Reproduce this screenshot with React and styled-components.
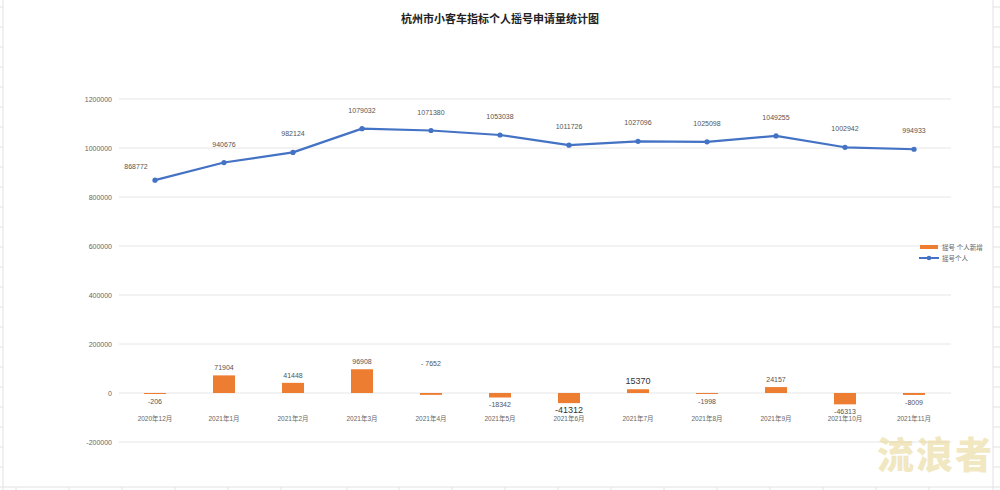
import React from "react";
import styled, { createGlobalStyle } from "styled-components";

const Global = createGlobalStyle`
  html, body { margin: 0; padding: 0; background: #fff; }
  body { font-family: "Microsoft YaHei", "Noto Sans CJK SC", "Liberation Sans", sans-serif; }
`;

const Sheet = styled.div`
  position: relative;
  width: 1000px;
  height: 490px;
  overflow: hidden;
  background: #fff;
`;

const Title = styled.div`
  padding-top: 10px;
  text-align: center;
  font-size: 11px;
  font-weight: 700;
  color: #222;
  font-family: "Noto Sans CJK SC", sans-serif;
`;

const Watermark = styled.div`
  position: absolute;
  right: 6px;
  bottom: 10px;
  font-family: "Noto Sans CJK SC", sans-serif;
  font-weight: 900;
  font-size: 37px;
  letter-spacing: 2px;
  color: rgba(232, 215, 150, 0.6);
`;

const Chart = styled.svg`
  position: absolute;
  left: 0;
  top: 0;
  font-family: "Liberation Sans", "Noto Sans CJK SC", sans-serif;
`;

const months = ["2020年12月","2021年1月","2021年2月","2021年3月","2021年4月","2021年5月","2021年6月","2021年7月","2021年8月","2021年9月","2021年10月","2021年11月"];
const totals = [868772,940676,982124,1079032,1071380,1053038,1011726,1027096,1025098,1049255,1002942,994933];
const deltas = [-206,71904,41448,96908,-7652,-18342,-41312,15370,-1998,24157,-46313,-8009];

const y = v => 393 - (v * 49) / 200000;
const x = i => 155 + i * 69;
const ticks = [1200000,1000000,800000,600000,400000,200000,0,-200000];

export default function App() {
  const line = totals.map((v, i) => `${x(i)},${y(v)}`).join(" ");
  return (
    <Sheet>
      <Global />
      <Chart width="1000" height="490">
        {/* spreadsheet cell lines */}
        <line x1="3" y1="0" x2="3" y2="490" stroke="#e2e2e2" />
        <line x1="993" y1="0" x2="993" y2="490" stroke="#e2e2e2" />
        <line x1="0" y1="487" x2="1000" y2="487" stroke="#e2e2e2" />
        {Array.from({ length: 24 }).map((_, i) => (
          <g key={i}>
            <line x1="0" y1={i * 20 + 7} x2="3" y2={i * 20 + 7} stroke="#e2e2e2" />
            <line x1="993" y1={i * 20 + 7} x2="1000" y2={i * 20 + 7} stroke="#e2e2e2" />
          </g>
        ))}
        {[16, 69, 122, 175, 228, 281, 347, 399, 452, 505, 558, 611, 664, 717, 770, 823, 876, 929].map(v => (
          <line key={v} x1={v} y1="487" x2={v} y2="490" stroke="#e2e2e2" />
        ))}
        {ticks.map(t => (
          <g key={t}>
            <line x1="119" y1={y(t)} x2="951" y2={y(t)} stroke="#e6e6e6" strokeWidth="1" />
            <text x="112" y={y(t) + 2.5} fontSize="7" fill="#666" textAnchor="end">{t}</text>
          </g>
        ))}
        {deltas.map((d, i) => {
          const top = d > 0 ? y(d) : 393;
          const h = Math.max(Math.abs(y(d) - 393), 1);
          return (
            <g key={i}>
              <rect x={x(i) - 11} y={top} width="22" height={h} fill="#ed7d31" />
              <text
                x={x(i)}
                y={d > 0 ? top - 5 : i === 4 ? 366 : 393 + h + 10}
                fontSize={i === 6 || i === 7 ? 9 : 7}
                fill={i === 6 || i === 7 ? "#333" : "#555"}
                textAnchor="middle"
              >
                {i === 4 ? "- 7652" : d}
              </text>
              <text x={x(i)} y="421" fontSize="6.5" fill="#666" textAnchor="middle">{months[i]}</text>
            </g>
          );
        })}
        <polyline points={line} fill="none" stroke="#4472c4" strokeWidth="2.2" strokeLinejoin="round" />
        {totals.map((v, i) => (
          <g key={i}>
            <circle cx={x(i)} cy={y(v)} r="2.6" fill="#4472c4" />
            <text x={i === 0 ? x(i) - 19 : x(i)} y={i === 0 ? y(v) - 11 : y(v) - 16} fontSize="7" fill="#555" textAnchor="middle">{v}</text>
          </g>
        ))}
        <rect x="920" y="245" width="18" height="4" fill="#ed7d31" />
        <text x="942" y="249.5" fontSize="6.5" fill="#666">摇号 个人新增</text>
        <line x1="919" y1="258" x2="939" y2="258" stroke="#4472c4" strokeWidth="2" />
        <circle cx="929" cy="258" r="2.3" fill="#4472c4" />
        <text x="942" y="260.5" fontSize="6.5" fill="#666">摇号个人</text>
      </Chart>
      <Title>杭州市小客车指标个人摇号申请量统计图</Title>
      <Watermark>流浪者</Watermark>
    </Sheet>
  );
}
